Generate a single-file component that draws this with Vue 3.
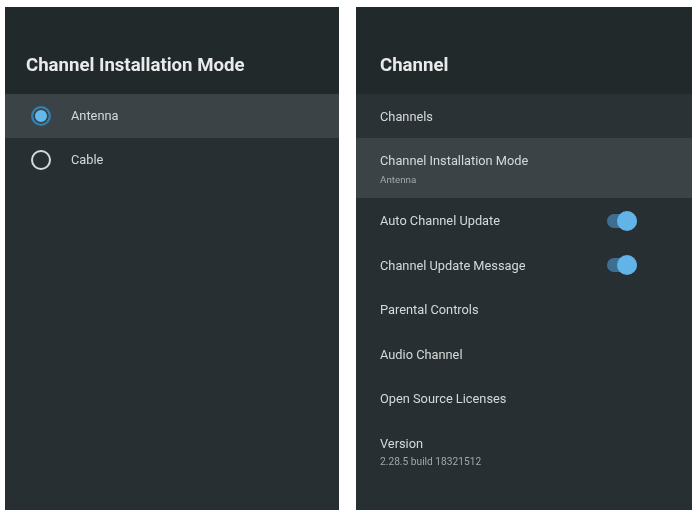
<template>
  <div class="screen">
    <section class="panel left">
      <header class="panel-title">Channel Installation Mode</header>
      <div
        v-for="mode in modes"
        :key="mode.label"
        :class="['radio-row', { active: mode.selected }]"
      >
        <span :class="['radio', { on: mode.selected }]"></span>
        <span class="label">{{ mode.label }}</span>
      </div>
    </section>

    <section class="panel right">
      <header class="panel-title">Channel</header>
      <div class="menu">
        <div
          v-for="item in items"
          :key="item.label"
          :class="['menu-row', { active: item.active, tall: item.active, first: item.first, version: item.version }]"
        >
          <div class="menu-text">
            <div class="label">{{ item.label }}</div>
            <div v-if="item.sub" class="sub">{{ item.sub }}</div>
          </div>
          <span v-if="item.toggle" class="switch"><span class="knob"></span></span>
        </div>
      </div>
    </section>
  </div>
</template>

<script setup>
const modes = [
  { label: 'Antenna', selected: true },
  { label: 'Cable', selected: false }
];

const items = [
  { label: 'Channels', first: true },
  { label: 'Channel Installation Mode', sub: 'Antenna', active: true },
  { label: 'Auto Channel Update', toggle: true },
  { label: 'Channel Update Message', toggle: true },
  { label: 'Parental Controls' },
  { label: 'Audio Channel' },
  { label: 'Open Source Licenses' },
  { label: 'Version', sub: '2.28.5 build 18321512', version: true }
];
</script>

<style>
html,
body {
  margin: 0;
  background: #fff;
}
</style>

<style scoped>
.screen {
  width: 696px;
  height: 515px;
  box-sizing: border-box;
  padding: 7px 4px 5px 5px;
  display: flex;
  gap: 17px;
  font-family: Roboto, "Liberation Sans", sans-serif;
  overflow: hidden;
  /* the source shot is a soft, low-res capture */
  filter: blur(0.45px);
}

.panel {
  height: 503px;
  background: #282f32;
  overflow: hidden;
}

.left {
  width: 334px;
}

.right {
  width: 336px;
}

.panel-title {
  height: 87px;
  box-sizing: border-box;
  padding: 47px 0 0 21px;
  background: #22292b;
  color: #e9ebeb;
  font-size: 18.6px;
  line-height: 22px;
  font-weight: 700;
}

.right .panel-title {
  padding-left: 24px;
}

.radio-row {
  height: 44px;
  display: flex;
  align-items: center;
  padding-left: 26px;
  gap: 20px;
}

.radio-row.active,
.menu-row.active {
  background: #3b4346;
}

.radio {
  width: 20px;
  height: 20px;
  box-sizing: border-box;
  border: 2.5px solid #d8dada;
  border-radius: 50%;
}

.radio.on {
  border-color: #2f7fb5;
  background: #63b9ea;
  box-shadow: inset 0 0 0 2px #3b4346;
}

.label {
  color: #d6d9d9;
  font-size: 12.8px;
  line-height: 16px;
}

.menu-row {
  height: 44.6px;
  box-sizing: border-box;
  display: flex;
  align-items: center;
  justify-content: space-between;
  padding: 1.5px 55px 0 24px;
}

.menu-row.first {
  height: 44px;
  background: #2b3235;
}

.menu-row.tall {
  height: 60px;
  padding-top: 2px;
}

.menu-row.tall .sub {
  margin-top: 5px;
}

.menu-row.version {
  height: 62px;
  padding-top: 0;
}

.sub {
  margin-top: 4px;
  color: #a2a7a8;
  font-size: 9.8px;
  line-height: 12px;
}

.menu-row.version .sub {
  font-size: 10.2px;
}

.switch {
  position: relative;
  width: 30px;
  height: 14px;
  margin-top: -1px;
  border-radius: 7px;
  background: #3e6f92;
}

.knob {
  position: absolute;
  top: -3px;
  right: 0;
  width: 20px;
  height: 20px;
  border-radius: 50%;
  background: #62b4e8;
}
</style>
